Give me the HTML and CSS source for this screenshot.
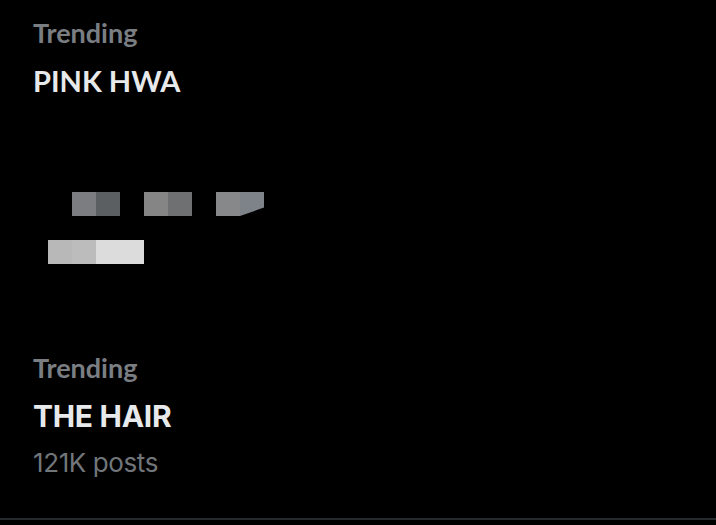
FILE: index.html
```html
<!DOCTYPE html>
<html>
<head>
<meta charset="utf-8">
<link rel="stylesheet" href="styles.css">
</head>
<body>
<div class="feed">
  <section class="trend first">
    <div class="label">Trending</div>
    <div class="title lato">PINK HWA</div>
    <div class="mosaic">
      <span class="px c1" style="background:#7b7d80"></span>
      <span class="px c2" style="background:#5c5f61"></span>
      <span class="px c4" style="background:#858585"></span>
      <span class="px c5" style="background:#6f7072"></span>
      <span class="px c7" style="background:#87888a"></span>
      <span class="px c8 cut" style="background:#7e838a"></span>
      <span class="px r3 c0" style="background:#b8b8b8"></span>
      <span class="px r3 c1" style="background:#bcbcbc"></span>
      <span class="px r3 c2 wide" style="background:#dcdcdc"></span>
    </div>
  </section>
  <section class="trend second">
    <div class="label">Trending</div>
    <div class="title inter">THE HAIR</div>
    <div class="meta">121K posts</div>
  </section>
</div>
</body>
</html>
```
FILE: styles.css
```css
html, body {
  margin: 0;
  padding: 0;
  background: #000;
}
body {
  width: 716px;
  height: 525px;
  overflow: hidden;
}
.feed {
  display: flex;
  flex-direction: column;
}
.trend {
  padding-left: 33px;
}
.first {
  padding-top: 17px;
}
.second {
  padding-top: 88px;
  padding-bottom: 39px;
  border-bottom: 2px solid #26292b;
}
.label {
  font-family: "Lato", sans-serif;
  font-weight: 700;
  font-size: 27px;
  line-height: 32px;
  color: #7a7e83;
}
.title {
  color: #e7e9ea;
  font-weight: 700;
}
.title.lato {
  font-family: "Lato", sans-serif;
  font-size: 29px;
  line-height: 36px;
  margin-top: 14px;
}
.title.inter {
  font-family: "Inter", sans-serif;
  font-size: 30px;
  line-height: 36px;
  margin-top: 14px;
  letter-spacing: -0.3px;
}
.meta {
  font-family: "Inter", sans-serif;
  font-size: 26px;
  line-height: 32px;
  color: #71767b;
  margin-top: 13px;
  letter-spacing: -0.4px;
}
.mosaic {
  display: grid;
  grid-template-columns: repeat(10, 24px);
  grid-template-rows: repeat(3, 24px);
  margin-top: 93px;
  margin-left: 15px;
}
.px { grid-row: 1; display: block; }
.px.r3 { grid-row: 3; }
.c0 { grid-column: 1; }
.c1 { grid-column: 2; }
.c2 { grid-column: 3; }
.c4 { grid-column: 5; }
.c5 { grid-column: 6; }
.c7 { grid-column: 8; }
.c8 { grid-column: 9; }
.wide { grid-column: 3 / span 2; }
.cut {
  clip-path: polygon(0 0, 100% 0, 100% 65%, 0 100%);
}
```
